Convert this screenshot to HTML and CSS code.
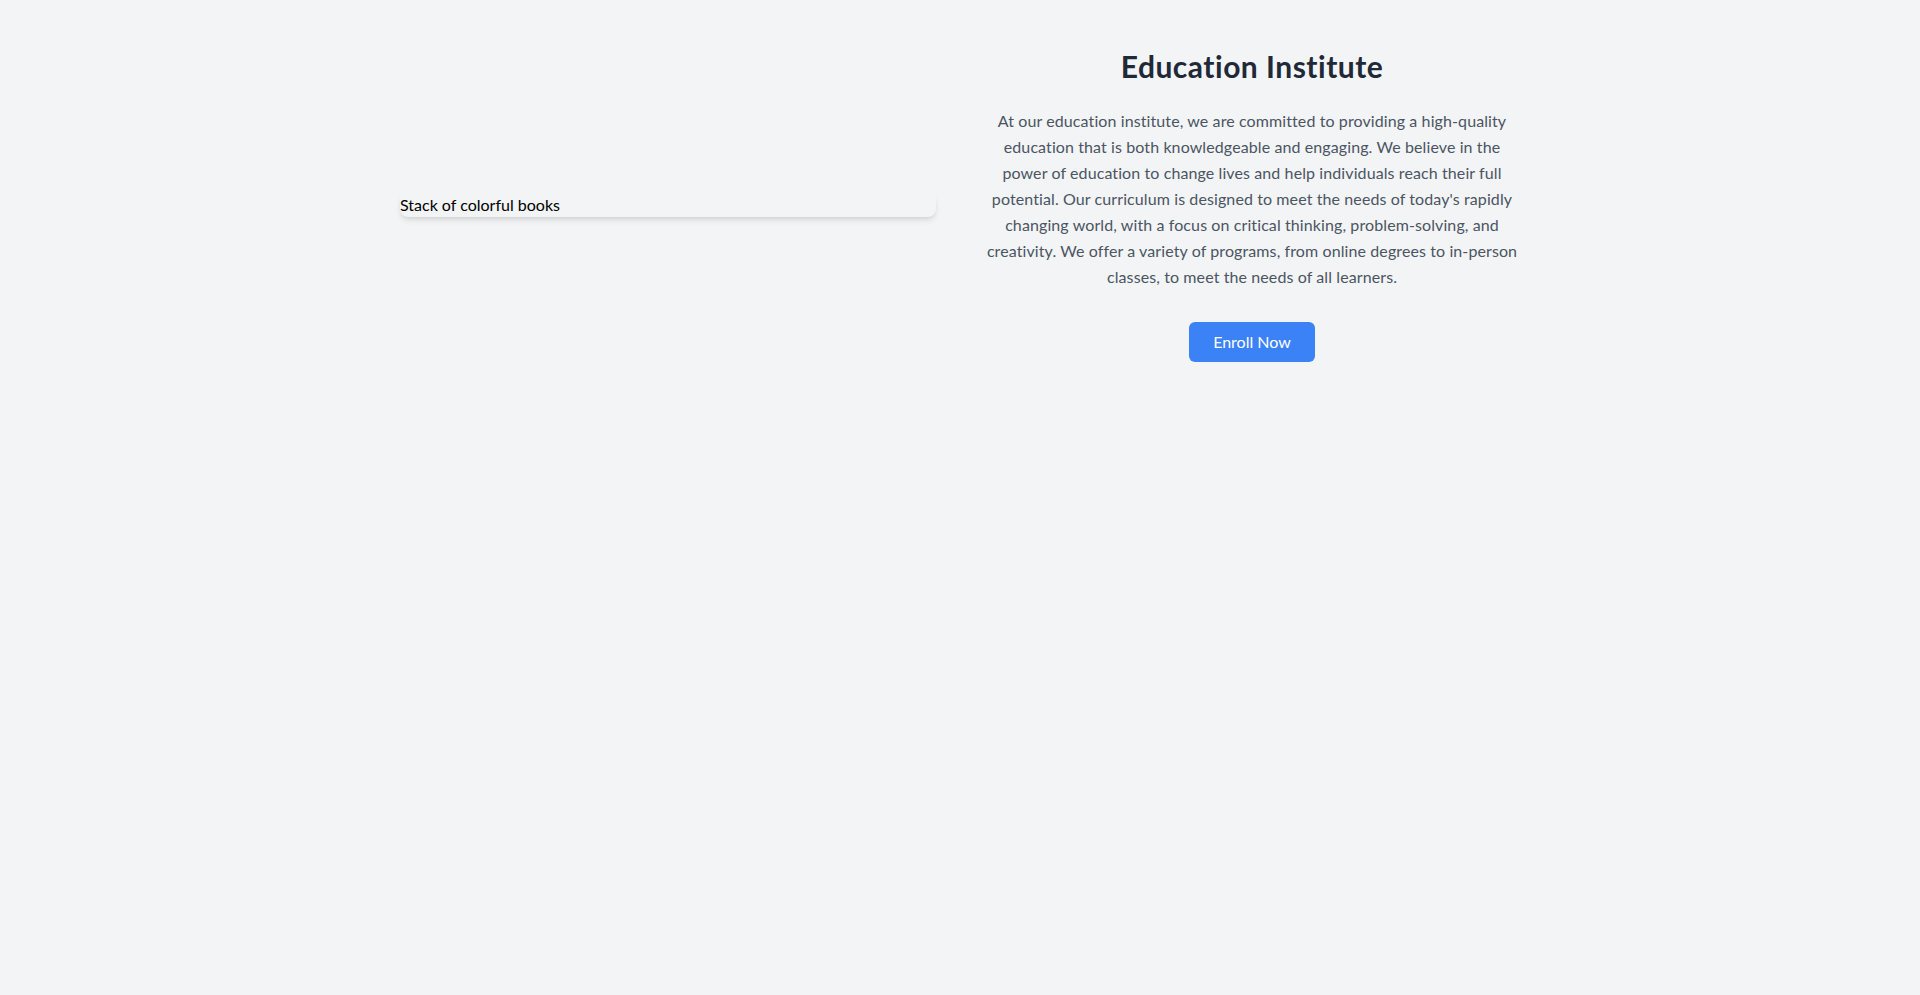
FILE: index.html
```html
<!DOCTYPE html>
<html lang="en">
<head>
<meta charset="utf-8">
<title>Education Institute</title>
<link rel="stylesheet" href="styles.css">
</head>
<body>
<section class="hero">
  <div class="hero-media">
    <div class="hero-image" role="img" aria-label="Stack of colorful books">Stack of colorful books</div>
  </div>
  <div class="hero-content">
    <h1 class="hero-title">Education Institute</h1>
    <p class="hero-text">At our education institute, we are committed to providing a high-quality education that is both knowledgeable and engaging. We believe in the power of education to change lives and help individuals reach their full potential. Our curriculum is designed to meet the needs of today's rapidly changing world, with a focus on critical thinking, problem-solving, and creativity. We offer a variety of programs, from online degrees to in-person classes, to meet the needs of all learners.</p>
    <button class="btn-primary" type="button">Enroll Now</button>
  </div>
</section>
</body>
</html>
```
FILE: styles.css
```css
*, *::before, *::after {
  box-sizing: border-box;
}
html, body {
  margin: 0;
  padding: 0;
}
body {
  background: #f3f4f6;
  font-family: Lato, "Liberation Sans", sans-serif;
  min-height: 100vh;
}
.hero {
  max-width: 1152px;
  margin: 0 auto;
  padding: 48px 16px;
  display: flex;
  align-items: center;
}
.hero-media {
  flex: 0 0 50%;
  padding-right: 24px;
}
.hero-image {
  width: 100%;
  border-radius: 8px;
  box-shadow: 0 4px 6px -1px rgba(0,0,0,0.1), 0 2px 4px -2px rgba(0,0,0,0.1);
  font-size: 16px;
  line-height: 24px;
  color: #000;
}
.hero-content {
  flex: 0 0 50%;
  padding-left: 24px;
  text-align: center;
}
.hero-title {
  margin: 0 0 24px;
  font-size: 30px;
  line-height: 36px;
  font-weight: 700;
  letter-spacing: 0.5px;
  color: #1f2937;
}
.hero-text {
  margin: 0 0 32px;
  font-size: 16px;
  line-height: 26px;
  letter-spacing: 0.1px;
  color: #4b5563;
}
.btn-primary {
  background: #3b82f6;
  color: #fff;
  border: none;
  border-radius: 6px;
  padding: 8px 24px;
  font-family: inherit;
  font-size: 16px;
  line-height: 24px;
  cursor: pointer;
}
```
